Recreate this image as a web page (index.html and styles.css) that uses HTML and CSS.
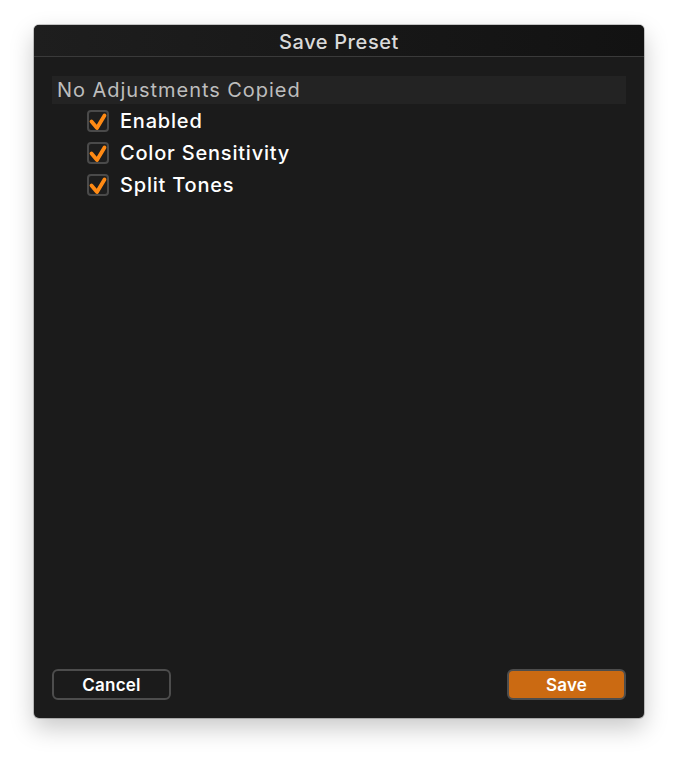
FILE: index.html
```html
<!DOCTYPE html>
<html>
<head>
<meta charset="utf-8">
<link rel="stylesheet" href="styles.css">
</head>
<body>
<div class="window">
  <div class="titlebar">Save Preset</div>
  <div class="content">
    <div class="group-header">No Adjustments Copied</div>
    <ul class="items">
      <li class="item"><span class="check"><svg viewBox="0 0 18 18" width="18" height="18"><path d="M2.5 9.5 L8 16 L15.5 3.5" fill="none" stroke="#ff8a14" stroke-width="3.8" stroke-linecap="round" stroke-linejoin="round"/></svg></span><span class="label">Enabled</span></li>
      <li class="item"><span class="check"><svg viewBox="0 0 18 18" width="18" height="18"><path d="M2.5 9.5 L8 16 L15.5 3.5" fill="none" stroke="#ff8a14" stroke-width="3.8" stroke-linecap="round" stroke-linejoin="round"/></svg></span><span class="label">Color Sensitivity</span></li>
      <li class="item"><span class="check"><svg viewBox="0 0 18 18" width="18" height="18"><path d="M2.5 9.5 L8 16 L15.5 3.5" fill="none" stroke="#ff8a14" stroke-width="3.8" stroke-linecap="round" stroke-linejoin="round"/></svg></span><span class="label">Split Tones</span></li>
    </ul>
    <div class="spacer"></div>
    <div class="buttons">
      <button class="btn btn-cancel">Cancel</button>
      <button class="btn btn-save">Save</button>
    </div>
  </div>
</div>
</body>
</html>
```
FILE: styles.css
```css
html, body {
  margin: 0;
  padding: 0;
  background: #ffffff;
}
body {
  padding: 25px 34px 42px 34px;
  font-family: Inter, "Liberation Sans", Arial, sans-serif;
}
.window {
  width: 610px;
  height: 693px;
  background: #1b1b1b;
  border-radius: 5px;
  box-shadow: 0 10px 24px rgba(0,0,0,0.22), 0 0 0 1px rgba(0,0,0,0.2);
  display: flex;
  flex-direction: column;
  overflow: hidden;
}
.titlebar {
  height: 31px;
  line-height: 34px;
  text-align: center;
  color: #dadada;
  font-size: 20px;
  font-weight: 500;
  letter-spacing: 0.6px;
  background: linear-gradient(to right, #1e1e1e, #121212);
  border-bottom: 1px solid #3a3a3a;
  flex: none;
}
.content {
  flex: 1;
  display: flex;
  flex-direction: column;
  padding: 19px 18px 18px 18px;
}
.group-header {
  height: 28px;
  line-height: 29px;
  background: #232323;
  color: #bdbdbd;
  font-size: 20px;
  letter-spacing: 0.95px;
  padding-left: 5px;
}
.items {
  list-style: none;
  margin: 0;
  padding: 1px 0 0 35px;
}
.item {
  display: flex;
  align-items: center;
  height: 32px;
}
.check {
  width: 18px;
  height: 18px;
  border: 2px solid #4a4a4a;
  border-radius: 4px;
  background: #1e1e1e;
  margin-right: 11px;
  flex: none;
}
.check svg {
  display: block;
  overflow: visible;
}
.label {
  color: #ffffff;
  font-size: 20px;
  font-weight: 500;
  letter-spacing: 0.8px;
}
.spacer {
  flex: 1;
}
.buttons {
  display: flex;
  justify-content: space-between;
}
.btn {
  width: 119px;
  height: 31px;
  border-radius: 6px;
  border: 2px solid #4d4d4d;
  font-family: Inter, "Liberation Sans", Arial, sans-serif;
  font-weight: 600;
  font-size: 17px;
  letter-spacing: 0.2px;
  color: #ffffff;
  padding: 0;
}
.btn-cancel {
  background: #1b1b1b;
}
.btn-save {
  background: #cb6a12;
}
```
